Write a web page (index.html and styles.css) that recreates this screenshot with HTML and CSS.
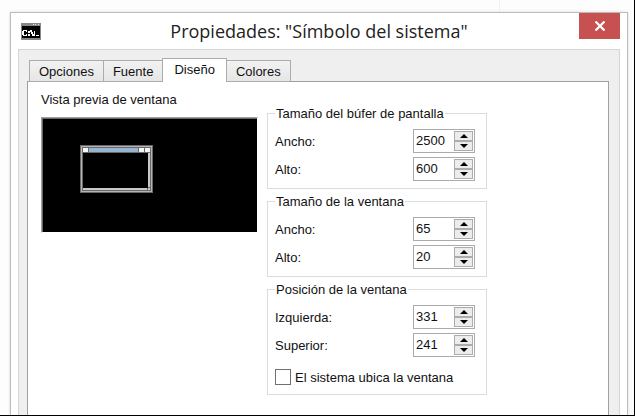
FILE: index.html
```
<!DOCTYPE html>
<html lang="es">
<head>
    <meta charset="UTF-8">
    <title>Propiedades: "Símbolo del sistema"</title>
    <link rel="stylesheet" href="styles.css">
</head>
<body>
    <div class="backdrop"></div>

    <main class="dialog">
        <header class="titlebar">
            <svg class="app-icon" width="20" height="17" viewBox="0 0 20 17" shape-rendering="crispEdges">
                <rect width="20" height="17" fill="#85878c"/>
                <rect x="1" y="3" width="18" height="12" fill="#000"/>
                <path d="M12 1h1v1h-1zM14 1h1v1h-1zM17 1h1v1h-1z" fill="#dfe3ea"/>
                <path d="M2 7h4v1H2zM1 8h2v4H1zM2 12h4v1H2zM5 8h1v1H5zM5 11h1v1H5zM7 8h2v2H7zM7 11h2v2H7zM9 7h2v2H9zM10 9h2v2h-2zM11 11h2v2h-2zM13 8h1v5h-1zM15 12h3v1h-3z" fill="#fff"/>
            </svg>
            <h1>Propiedades: "Símbolo del sistema"</h1>
            <button type="button" class="close" aria-label="Cerrar">
                <svg width="12" height="10" viewBox="0 0 12 10">
                    <path d="M1.5 0.5L10.5 9.5M10.5 0.5L1.5 9.5" stroke="#fff" stroke-width="2.2" fill="none"/>
                </svg>
            </button>
        </header>

        <div class="client">
            <div class="tabs" role="tablist">
                <button type="button" class="tab" role="tab">Opciones</button>
                <button type="button" class="tab" role="tab">Fuente</button>
                <button type="button" class="tab active" role="tab" aria-selected="true">Diseño</button>
                <button type="button" class="tab" role="tab">Colores</button>
            </div>

            <form class="panel" role="tabpanel">
                <div class="preview-column">
                    <p>Vista previa de ventana</p>
                    <div class="preview">
                        <!-- Console window in miniature -->
                        <svg width="73" height="48" viewBox="0 0 73 48" shape-rendering="crispEdges">
                            <rect width="73" height="48" fill="#696969"/>
                            <rect x="1" y="1" width="71" height="46" fill="#b4b4b4"/>
                            <rect x="2" y="2" width="69" height="44" fill="#696969"/>
                            <rect x="3" y="3" width="5" height="4" fill="#f5f5f5"/>
                            <rect x="9" y="3" width="49" height="4" fill="#99b4d1"/>
                            <rect x="59" y="3" width="5" height="4" fill="#f5f5f5"/>
                            <rect x="65" y="3" width="5" height="4" fill="#f5f5f5"/>
                            <rect x="3" y="8" width="65" height="35" fill="#000"/>
                            <rect x="68" y="8" width="2" height="34" fill="#c8c8c8"/>
                            <rect x="3" y="43" width="64" height="2" fill="#c8c8c8"/>
                            <rect x="68" y="43" width="2" height="2" fill="#c8c8c8"/>
                        </svg>
                    </div>
                </div>

                <div class="settings">
                    <fieldset>
                        <legend>Tamaño del búfer de pantalla</legend>
                        <div class="row">
                            <label for="bufferWidth">Ancho:</label>
                            <div class="spinner">
                                <input type="text" id="bufferWidth" value="2500">
                                <div class="arrows">
                                    <button type="button" class="up" aria-label="Aumentar"></button>
                                    <button type="button" class="down" aria-label="Reducir"></button>
                                </div>
                            </div>
                        </div>
                        <div class="row">
                            <label for="bufferHeight">Alto:</label>
                            <div class="spinner">
                                <input type="text" id="bufferHeight" value="600">
                                <div class="arrows">
                                    <button type="button" class="up" aria-label="Aumentar"></button>
                                    <button type="button" class="down" aria-label="Reducir"></button>
                                </div>
                            </div>
                        </div>
                    </fieldset>

                    <fieldset>
                        <legend>Tamaño de la ventana</legend>
                        <div class="row">
                            <label for="windowWidth">Ancho:</label>
                            <div class="spinner">
                                <input type="text" id="windowWidth" value="65">
                                <div class="arrows">
                                    <button type="button" class="up" aria-label="Aumentar"></button>
                                    <button type="button" class="down" aria-label="Reducir"></button>
                                </div>
                            </div>
                        </div>
                        <div class="row">
                            <label for="windowHeight">Alto:</label>
                            <div class="spinner">
                                <input type="text" id="windowHeight" value="20">
                                <div class="arrows">
                                    <button type="button" class="up" aria-label="Aumentar"></button>
                                    <button type="button" class="down" aria-label="Reducir"></button>
                                </div>
                            </div>
                        </div>
                    </fieldset>

                    <fieldset>
                        <legend>Posición de la ventana</legend>
                        <div class="row">
                            <label for="left">Izquierda:</label>
                            <div class="spinner">
                                <input type="text" id="left" value="331">
                                <div class="arrows">
                                    <button type="button" class="up" aria-label="Aumentar"></button>
                                    <button type="button" class="down" aria-label="Reducir"></button>
                                </div>
                            </div>
                        </div>
                        <div class="row">
                            <label for="top">Superior:</label>
                            <div class="spinner">
                                <input type="text" id="top" value="241">
                                <div class="arrows">
                                    <button type="button" class="up" aria-label="Aumentar"></button>
                                    <button type="button" class="down" aria-label="Reducir"></button>
                                </div>
                            </div>
                        </div>
                        <div class="check">
                            <input type="checkbox" id="autoPosition">
                            <label for="autoPosition">El sistema ubica la ventana</label>
                        </div>
                    </fieldset>
                </div>
            </form>
        </div>
    </main>
</body>
</html>
```

FILE: styles.css
```
* {
    box-sizing: border-box;
}

body {
    display: flex;
    flex-direction: column;
    height: 100vh;
    margin: 0;
    border-right: 1px solid #000;
    border-bottom: 1px solid #000;
    background-color: #fdfdfd;
    color: #111;
    font-family: "Liberation Sans", Arial, sans-serif;
    font-size: 13px;
    line-height: 16px;
    overflow: hidden;
}

button, input {
    font: inherit;
    color: inherit;
}

.backdrop {
    flex: none;
    width: 500px;
    height: 12px;
    border-right: 1px solid #f0f0f0;
}

/* Dialog window */
.dialog {
    flex: 1;
    display: flex;
    flex-direction: column;
    min-height: 0;
    margin: 0 6px 0 10px;
    padding: 0 7px;
    border: 1px solid #bcbcbc;
    border-bottom: none;
    background-color: #fff;
    box-shadow: 0 0 3px #ddd;
}

.titlebar {
    flex: none;
    display: grid;
    grid-template-columns: 41px 1fr 41px;
    height: 36px;
}

.app-icon {
    margin: 10px 0 0 3px;
}

.titlebar h1 {
    margin: 0;
    text-align: center;
    font-family: "Open Sans", "Noto Sans", sans-serif;
    font-size: 18px;
    font-weight: normal;
    line-height: 36px;
    color: #222;
    white-space: nowrap;
}

.close {
    display: flex;
    align-items: center;
    justify-content: center;
    height: 26px;
    padding: 0;
    border: none;
    background-color: #c75050;
}

.client {
    flex: 1;
    display: flex;
    flex-direction: column;
    min-height: 0;
    padding: 8px 10px 0 8px;
    border: 1px solid #d5d5d5;
    border-bottom: none;
    background-color: #efefef;
}

/* Tabs */
.tabs {
    display: flex;
    align-items: flex-end;
    height: 24px;
    margin-bottom: -1px;
    padding-left: 2px;
    z-index: 1;
}

.tab {
    height: 22px;
    padding: 2px 9px 0;
    border: 1px solid #acacac;
    background: linear-gradient(#f2f2f2, #e6e6e6);
}

.tab + .tab {
    margin-left: -1px;
}

.tab.active {
    height: 24px;
    padding: 0 11px 2px;
    border-bottom: none;
    background: #fff;
}

.panel {
    flex: 1;
    display: flex;
    gap: 9px;
    min-height: 0;
    padding: 10px 13px 0;
    border: 1px solid #a0a0a0;
    border-bottom: none;
    background-color: #fff;
}

.preview-column p {
    margin: 0 0 9px;
}

.preview {
    width: 217px;
    height: 116px;
    padding: 27px 38px;
    border: 1px solid #a0a0a0;
    border-right-color: #fff;
    border-bottom-color: #fff;
    background-color: #000;
    box-shadow: inset 1px 1px #696969;
}

/* Groups of settings */
.settings {
    display: flex;
    flex-direction: column;
    gap: 3px;
    width: 220px;
    padding-top: 12px;
}

fieldset {
    margin: 0;
    padding: 7px 11px 7px 7px;
    border: 1px solid #dcdcdc;
}

legend {
    padding: 2px 1px 0;
}

.row {
    display: flex;
    align-items: center;
    justify-content: space-between;
}

.row + .row {
    margin-top: 4px;
}

.row label, .check label {
    padding-top: 2px;
}

.spinner {
    display: flex;
    width: 62px;
    height: 24px;
    padding: 1px;
    border: 1px solid #ababab;
    background-color: #fff;
}

.spinner input {
    flex: 1;
    min-width: 0;
    padding: 0 0 0 1px;
    border: none;
    outline: none;
    background: none;
}

.arrows {
    display: flex;
    flex-direction: column;
    width: 19px;
}

.arrows button {
    flex: 1;
    display: flex;
    align-items: center;
    justify-content: center;
    padding: 0;
    border: 1px solid #acacac;
    background-color: #ececec;
}

.up::before, .down::before {
    content: "";
    border: 4px solid transparent;
}

.up::before {
    border-top: none;
    border-bottom-color: #000;
}

.down::before {
    border-bottom: none;
    border-top-color: #000;
}

.check {
    display: flex;
    align-items: center;
    gap: 4px;
    height: 16px;
    margin: 12px 0 2px;
}

.check input {
    appearance: none;
    width: 16px;
    height: 16px;
    margin: 0;
    border: 1px solid #707070;
    background-color: #fff;
}
```
